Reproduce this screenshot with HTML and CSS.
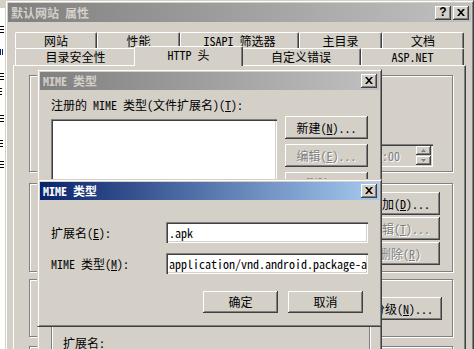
FILE: index.html
```html
<!DOCTYPE html>
<html lang="zh-CN">
<head>
    <meta charset="UTF-8">
    <title>默认网站 属性</title>
    <link rel="stylesheet" href="styles.css">
</head>
<body>
    <div class="desk">
        <!-- window behind, only slivers of its right edge show -->
        <div class="backwin">
            <span class="frag f1"></span>
            <span class="frag f2 sel"></span>
            <span class="frag f3"></span>
            <span class="frag f4"></span>
            <span class="frag f5"></span>
            <span class="frag f6"></span>
            <span class="frag f7"></span>
        </div>

        <div class="win win-main">
            <div class="titlebar inactive main-title">
                <span class="title">默认网站 属性</span>
                <span class="tbtn help">?</span>
                <span class="tbtn"><svg width="8" height="7" viewBox="0 0 8 7"><path d="M0 0h2l2 2.3 2-2.3h2l-3 3.5 3 3.5h-2l-2-2.3-2 2.3h-2l3-3.5z"/></svg></span>
            </div>
            <div class="main-body">
                <div class="tabs">
                    <div class="tabrow back">
                        <div class="tab">网站</div>
                        <div class="tab">性能</div>
                        <div class="tab">ISAPI 筛选器</div>
                        <div class="tab">主目录</div>
                        <div class="tab">文档</div>
                    </div>
                    <div class="tabrow front">
                        <div class="tab">目录安全性</div>
                        <div class="tab sel">HTTP 头</div>
                        <div class="tab">自定义错误</div>
                        <div class="tab">ASP.NET</div>
                    </div>
                </div>
                <div class="panel">
                    <div class="group g1">
                        <div class="dtp">
                            <span class="dtp-text">0:00:00</span>
                            <span class="spin">
                                <span class="spin-btn"><svg width="5" height="3" viewBox="0 0 5 3"><path d="M2.5 0L5 3H0z"/></svg></span>
                                <span class="spin-btn"><svg width="5" height="3" viewBox="0 0 5 3"><path d="M0 0h5L2.5 3z"/></svg></span>
                            </span>
                        </div>
                    </div>
                    <div class="group g2">
                        <div class="btn">添加(<u>D</u>)...</div>
                        <div class="btn off">编辑(<u>T</u>)...</div>
                        <div class="btn off">删除(<u>R</u>)</div>
                    </div>
                    <div class="group g3">
                        <div class="btn wide">编辑分级(<u>N</u>)...</div>
                    </div>
                    <div class="group g4"></div>
                </div>
            </div>
        </div>

        <div class="win win-list">
            <div class="titlebar inactive">
                <span class="title">MIME 类型</span>
                <span class="tbtn"><svg width="8" height="7" viewBox="0 0 8 7"><path d="M0 0h2l2 2.3 2-2.3h2l-3 3.5 3 3.5h-2l-2-2.3-2 2.3h-2l3-3.5z"/></svg></span>
            </div>
            <div class="list-body">
                <div class="list-label">注册的 MIME 类型(文件扩展名)(<u>T</u>):</div>
                <div class="list-row">
                    <div class="listbox"></div>
                    <div class="list-btns">
                        <div class="btn">新建(<u>N</u>)...</div>
                        <div class="btn off">编辑(<u>E</u>)...</div>
                        <div class="btn off">删除(<u>R</u>)</div>
                    </div>
                </div>
                <div class="group details">
                    <div class="detail-line">扩展名:</div>
                </div>
            </div>
        </div>

        <div class="win win-edit">
            <div class="titlebar active">
                <span class="title">MIME 类型</span>
                <span class="tbtn"><svg width="8" height="7" viewBox="0 0 8 7"><path d="M0 0h2l2 2.3 2-2.3h2l-3 3.5 3 3.5h-2l-2-2.3-2 2.3h-2l3-3.5z"/></svg></span>
            </div>
            <div class="edit-body">
                <div class="field">
                    <span class="field-label">扩展名(<u>E</u>):</span>
                    <span class="edit">.apk</span>
                </div>
                <div class="field">
                    <span class="field-label">MIME 类型(<u>M</u>):</span>
                    <span class="edit">application/vnd.android.package-archive</span>
                </div>
                <div class="dlg-btns">
                    <div class="btn small">确定</div>
                    <div class="btn small">取消</div>
                </div>
            </div>
        </div>
    </div>
</body>
</html>
```

FILE: styles.css
```css
* {
    box-sizing: border-box;
}
body {
    margin: 0;
    background: #d4d0c8;
    font: 12px/14px "Noto Sans Mono CJK SC", "Noto Sans CJK SC", sans-serif;
    color: #000;
}
u {
    text-decoration: underline;
    text-underline-offset: 1px;
}
.desk {
    position: relative;
    width: 474px;
    height: 349px;
    overflow: hidden;
}

/* window behind */
.backwin {
    position: absolute;
    left: 0;
    top: 0;
    width: 6px;
    height: 349px;
    display: flex;
    flex-direction: column;
    align-items: flex-start;
    background: #fff;
    border-top: 8px solid #d4d0c8;
    border-right: 1px solid #808080;
}
.frag {
    width: 4px;
    height: 9px;
    background: repeating-linear-gradient(#000 0 1px, transparent 1px 3px);
}
.frag.f1 { margin-top: 18px; }
.frag.f2 { margin-top: 14px; height: 6px; background: repeating-linear-gradient(90deg, #0a246a 0 1px, transparent 1px 2px); }
.frag.f3 { margin-top: 18px; }
.frag.f4 { margin-top: 6px; width: 2px; }
.frag.f5 { margin-top: 18px; }
.frag.f6 { margin-top: 16px; width: 3px; }
.frag.f7 { margin-top: 12px; }

/* windows */
.win {
    position: absolute;
    display: flex;
    flex-direction: column;
    background: #d4d0c8;
    border: 1px solid;
    border-color: #d4d0c8 #404040 #404040 #d4d0c8;
    box-shadow: inset 1px 1px #fff, inset -1px -1px #808080;
    padding: 2px;
}
.win-main {
    left: 5px;
    top: 0;
    width: 469px;
    height: 380px;
}
.win-list {
    left: 37px;
    top: 69px;
    width: 345px;
    height: 320px;
}
.win-edit {
    left: 37px;
    top: 179px;
    width: 345px;
    height: 148px;
}

.titlebar {
    display: flex;
    align-items: center;
    height: 18px;
    padding: 0 2px 0 3px;
    font-weight: bold;
    flex-shrink: 0;
}
.titlebar.main-title {
    height: 19px;
}
.titlebar.inactive {
    background: linear-gradient(to right, #808080, #c0c0c0);
    color: #d4d0c8;
}
.titlebar.active {
    background: linear-gradient(to right, #0a246a, #a6caf0);
    color: #fff;
}
.title {
    flex: 1;
}
.tbtn {
    display: flex;
    align-items: center;
    justify-content: center;
    width: 16px;
    height: 14px;
    background: #d4d0c8;
    box-shadow: inset -1px -1px #404040, inset 1px 1px #fff, inset -2px -2px #808080;
    color: #000;
    padding-bottom: 1px;
}
.tbtn + .tbtn {
    margin-left: 2px;
}
.tbtn.help {
    font: bold 12px/12px "Liberation Sans", sans-serif;
}

/* property sheet */
.main-body {
    padding: 10px 5px 0;
    display: flex;
    flex-direction: column;
    flex: 1;
}
.tabs {
    margin-left: 2px;
}
.tabrow {
    display: flex;
}
.tab {
    height: 16px;
    border-top: 1px solid #fff;
    border-left: 1px solid #fff;
    border-right: 1px solid #404040;
    border-radius: 2px 2px 0 0;
    box-shadow: inset -1px 0 #808080;
    background: #d4d0c8;
    text-align: center;
    line-height: 15px;
}
.tabrow.front .tab {
    height: 17px;
    line-height: 16px;
}
.tabrow.back .tab:nth-child(1) { width: 82px; }
.tabrow.back .tab:nth-child(2) { width: 83px; }
.tabrow.back .tab:nth-child(3) { width: 119px; }
.tabrow.back .tab:nth-child(4) { width: 83px; }
.tabrow.back .tab:nth-child(5) { width: 82px; }
.tabrow.front .tab:nth-child(1) { width: 121px; }
.tabrow.front .tab:nth-child(3) { width: 120px; }
.tabrow.front .tab:nth-child(4) { width: 103px; }
.tabrow.front .tab.sel {
    position: relative;
    z-index: 1;
    width: 109px;
    height: 20px;
    margin: -2px -2px -1px;
    line-height: 15px;
}

.panel {
    flex: 1;
    border-top: 1px solid #fff;
    border-left: 1px solid #fff;
    border-right: 1px solid #404040;
    box-shadow: inset -1px 0 #808080;
    padding: 9px 12px 0 15px;
}
.group {
    border: 1px solid #808080;
    box-shadow: inset 1px 1px #fff, 1px 1px #fff;
}
.g1 {
    height: 97px;
    display: flex;
    justify-content: flex-end;
    align-items: flex-start;
    padding: 68px 19px 0 0;
}
.g2 {
    height: 89px;
    margin-top: 11px;
    display: flex;
    flex-direction: column;
    align-items: flex-end;
    gap: 2px;
    padding: 8px 12px 0 0;
}
.g3 {
    height: 58px;
    margin-top: 7px;
    display: flex;
    justify-content: flex-end;
    padding: 17px 10px 0 0;
}
.g4 {
    height: 40px;
    margin-top: 9px;
}

.dtp {
    display: flex;
    width: 79px;
    height: 23px;
    padding: 2px;
    box-shadow: inset 1px 1px #808080, inset 2px 2px #404040, inset -1px -1px #fff, inset -2px -2px #d4d0c8;
}
.dtp-text {
    flex: 1;
    padding-left: 2px;
    line-height: 19px;
    color: #808080;
    text-shadow: 1px 1px #fff;
}
.spin {
    width: 15px;
    display: flex;
    flex-direction: column;
    gap: 1px;
}
.spin-btn {
    flex: 1;
    display: flex;
    align-items: center;
    justify-content: center;
    box-shadow: inset -1px -1px #404040, inset 1px 1px #fff, inset -2px -2px #808080;
}
.spin-btn svg {
    fill: #808080;
}

/* buttons */
.btn {
    display: flex;
    align-items: center;
    justify-content: center;
    width: 80px;
    height: 23px;
    background: #d4d0c8;
    box-shadow: inset -1px -1px #404040, inset 1px 1px #fff, inset -2px -2px #808080;
    white-space: nowrap;
}
.btn.off {
    color: #808080;
    text-shadow: 1px 1px #fff;
}
.btn.wide {
    width: 102px;
}
.btn.small {
    width: 75px;
    height: 22px;
}

/* MIME list dialog */
.list-body {
    padding: 9px 11px 0;
}
.list-label {
    line-height: 12px;
    white-space: nowrap;
}
.list-row {
    display: flex;
    gap: 8px;
    margin-top: 5px;
}
.listbox {
    width: 227px;
    height: 170px;
    margin-top: 3px;
    background: #fff;
    box-shadow: inset 1px 1px #808080, inset 2px 2px #404040, inset -1px -1px #fff, inset -2px -2px #d4d0c8;
}
.list-btns {
    display: flex;
    flex-direction: column;
    gap: 5px;
}
.list-btns .btn {
    width: 83px;
}
.details {
    width: 319px;
    height: 80px;
    margin-top: 10px;
    padding: 36px 0 0 11px;
}

/* MIME edit dialog */
.edit-body {
    padding: 22px 11px 0;
}
.field {
    display: flex;
    align-items: center;
    height: 21px;
}
.field + .field {
    margin-top: 10px;
}
.field-label {
    width: 115px;
    white-space: nowrap;
}
.edit {
    width: 202px;
    height: 21px;
    padding: 0 0 0 3px;
    line-height: 21px;
    background: #fff;
    white-space: nowrap;
    overflow: hidden;
    box-shadow: inset 1px 1px #808080, inset 2px 2px #404040, inset -1px -1px #fff, inset -2px -2px #d4d0c8;
}
.dlg-btns {
    display: flex;
    justify-content: flex-end;
    gap: 10px;
    margin-top: 17px;
    padding-right: 5px;
}
```
